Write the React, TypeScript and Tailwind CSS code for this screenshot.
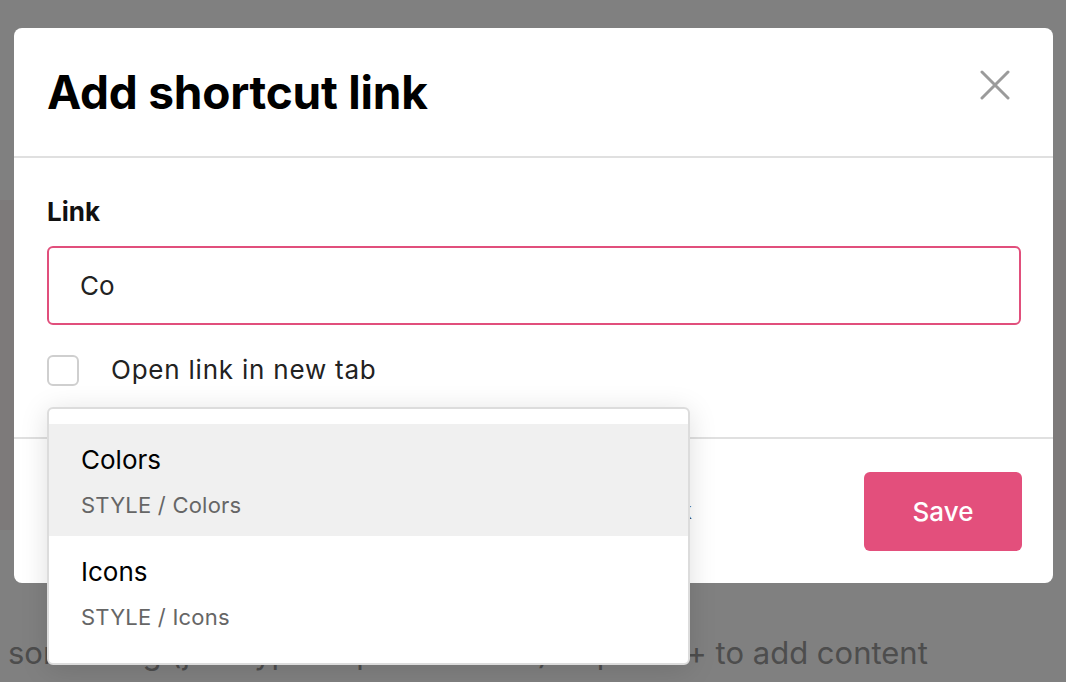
import React from "react";

const font = { fontFamily: "Inter, 'Noto Sans', sans-serif" };

export default function App() {
  return (
    <div
      className="relative w-[1066px] h-[682px] overflow-hidden bg-[#808080]"
      style={font}
    >
      {/* page behind the overlay */}
      <div className="flex flex-col">
        <div className="h-[200px]" />
        <div className="h-[330px] bg-[#7d7a7a]" />
        <div className="pt-[103px] pl-[8px] text-[31px] leading-[40px] text-[#4d4d4d] whitespace-nowrap">
          something (just type or paste it here) or press + to add content
        </div>
      </div>

      {/* modal */}
      <div className="absolute left-[14px] top-[28px] w-[1039px] h-[555px] bg-white rounded-[8px] flex flex-col">
        <div className="h-[130px] shrink-0 flex items-center justify-between pl-[33px] pr-[43px] border-b-2 border-[#e0e0e0]">
          <h1 className="text-[46px] font-bold text-black tracking-[-0.005em] leading-none">
            Add shortcut link
          </h1>
          <svg width="30" height="30" viewBox="0 0 30 30" className="mt-[-15px]">
            <path
              d="M2 2 L28 28 M28 2 L2 28"
              stroke="#9b9b9b"
              strokeWidth="3"
              strokeLinecap="round"
            />
          </svg>
        </div>

        <div className="h-[281px] shrink-0 flex flex-col pl-[33px] pr-[32px] pt-[36px] border-b-2 border-[#e0e0e0]">
          <label className="text-[26px] font-bold text-[#111] leading-[36px]">
            Link
          </label>
          <div className="mt-[16px] h-[79px] border-2 border-[#e14f7c] rounded-[6px] flex items-center pl-[31px] text-[26px] text-[#222]">
            Co
          </div>
          <div className="mt-[29px] flex items-center gap-[32px]">
            <div className="w-[32px] h-[31px] border-2 border-[#cfcfcf] rounded-[6px]" />
            <span className="text-[26px] text-[#222] leading-[32px] tracking-[0.03em]">
              Open link in new tab
            </span>
          </div>
        </div>

        <div className="flex-1 flex items-center justify-end pr-[31px] gap-[140px]">
          <button className="h-[79px] px-[32px] text-[23px] text-[#4a4a4a]">
            Remove link
          </button>
          <button className="w-[158px] h-[79px] rounded-[6px] bg-[#e34f7c] text-white text-[26px] font-medium">
            Save
          </button>
        </div>
      </div>

      {/* autocomplete dropdown */}
      <div className="absolute left-[47px] top-[407px] w-[643px] h-[258px] bg-white border-2 border-[#dcdcdc] rounded-[6px] shadow-[0_4px_28px_rgba(0,0,0,0.13)] pt-[15px]">
        <div className="h-[112px] bg-[#f0f0f0] flex flex-col justify-center pl-[32px] pt-[2px]">
          <div className="text-[26px] text-black leading-[34px]">Colors</div>
          <div className="mt-[13px] text-[22px] text-[#666] leading-[30px] tracking-[0.01em]">
            STYLE / Colors
          </div>
        </div>
        <div className="h-[112px] flex flex-col justify-center pl-[32px] pt-[2px]">
          <div className="text-[26px] text-black leading-[34px]">Icons</div>
          <div className="mt-[13px] text-[22px] text-[#666] leading-[30px] tracking-[0.01em]">
            STYLE / Icons
          </div>
        </div>
      </div>
    </div>
  );
}
